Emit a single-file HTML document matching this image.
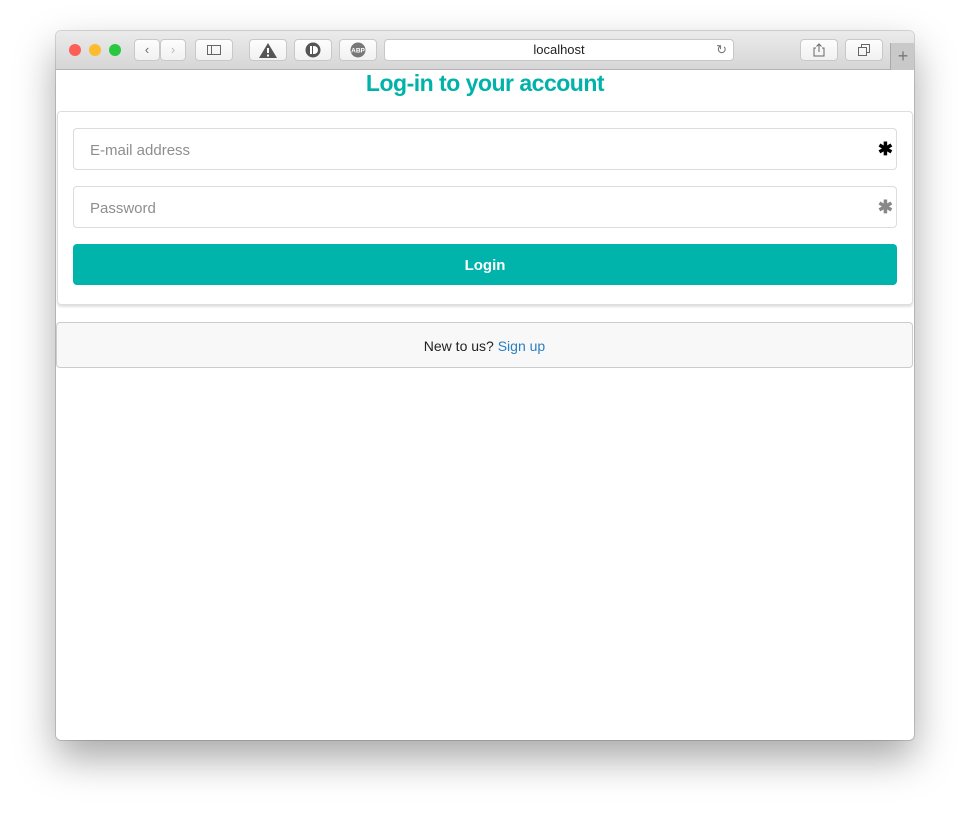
<!DOCTYPE html>
<html><head><style>
body{margin:0;width:970px;height:820px;background:#fff;position:relative;overflow:hidden;font-family:"Liberation Sans",sans-serif}
.win{position:absolute;left:56px;top:31px;width:858px;height:709px;background:#fff;border-radius:5px;box-shadow:0 18px 40px rgba(0,0,0,.35),0 0 0 1px rgba(0,0,0,.15);overflow:hidden}
.tb{position:absolute;left:0;top:0;width:858px;height:38px;background:linear-gradient(#ebebeb,#d6d6d6);border-bottom:1px solid #b4b4b4}
.dot{position:absolute;top:13px;width:12px;height:12px;border-radius:50%}
.btn{position:absolute;top:8px;height:22px;background:linear-gradient(#fdfdfd,#f1f1f1);border:1px solid #c8c8c8;border-radius:4px;box-sizing:border-box;color:#666;font-size:13px;text-align:center;line-height:20px}
.url{position:absolute;left:328px;top:8px;width:350px;height:22px;background:#fff;border:1px solid #c8c8c8;border-radius:4px;box-sizing:border-box;text-align:center;font-size:13px;line-height:20px;color:#222}
h1{position:absolute;left:0;top:39px;width:858px;margin:0;text-align:center;color:#00b2a9;font-size:23px;font-weight:bold;letter-spacing:-.5px}
.seg{position:absolute;left:1px;top:80px;width:856px;height:194px;border:1px solid #ddd;border-radius:4px;box-sizing:border-box;box-shadow:0 2px 2px rgba(0,0,0,.12)}
.inp{position:absolute;left:15px;width:824px;height:42px;border:1px solid #dcdcdc;border-radius:4px;box-sizing:border-box;font-size:15px;color:#8e8e8e;padding-left:16px;line-height:44px}
.ast{position:absolute;right:3px;top:-2px;font-size:18px;font-weight:bold}
.login{position:absolute;left:15px;top:132px;width:824px;height:41px;background:#00b4ab;border-radius:4px;color:#fff;font-weight:bold;font-size:15px;text-align:center;line-height:44px}
.msg{position:absolute;left:0;top:291px;width:857px;height:46px;background:#f8f8f8;border:1px solid #ccc;border-radius:4px;box-sizing:border-box;text-align:center;line-height:47px;font-size:14px;color:#222}
.msg a{color:#2a7fc0;text-decoration:none}
</style></head><body>
<div class="win">
<div class="tb">
<div class="dot" style="left:13px;background:#fc5f57"></div>
<div class="dot" style="left:33px;background:#fdbc2e"></div>
<div class="dot" style="left:53px;background:#28c840"></div>
<div class="btn" style="left:78px;width:26px">&#8249;</div>
<div class="btn" style="left:104px;width:26px;color:#bbb">&#8250;</div>
<div class="btn" style="left:139px;width:38px"><svg width="14" height="10" viewBox="0 0 14 10" style="margin-top:5px"><rect x=".5" y=".5" width="13" height="9" fill="none" stroke="#666"/><line x1="4.5" y1="0" x2="4.5" y2="10" stroke="#666"/></svg></div>
<div class="btn" style="left:193px;width:38px"><svg width="20" height="17" viewBox="0 0 20 17" style="margin-top:2px"><path d="M10 1L19 16H1Z" fill="#555"/><rect x="9" y="6" width="2" height="5" fill="#fff"/><rect x="9" y="12.5" width="2" height="2" fill="#fff"/></svg></div>
<div class="btn" style="left:238px;width:38px"><svg width="16" height="16" style="margin-top:2px"><circle cx="8" cy="8" r="7.5" fill="#555"/><rect x="5" y="4" width="2" height="8" fill="#fff"/><path d="M8 4h1a4 4 0 010 8H8z" fill="#fff"/></svg></div>
<div class="btn" style="left:283px;width:38px"><svg width="16" height="16" style="margin-top:2px"><circle cx="8" cy="8" r="7.5" fill="#777"/><text x="8" y="10.5" font-size="6.5" font-weight="bold" fill="#fff" text-anchor="middle" font-family="Liberation Sans">ABP</text></svg></div>
<div class="url">localhost<span style="position:absolute;right:6px;color:#777">&#8635;</span></div>
<div class="btn" style="left:744px;width:38px"><svg width="12" height="14" style="margin-top:3px"><path d="M3 5H1v8h10V5H9M6 1v8M3.5 3.5L6 1l2.5 2.5" fill="none" stroke="#666"/></svg></div>
<div class="btn" style="left:789px;width:38px"><svg width="12" height="12" style="margin-top:4px"><rect x=".5" y="3.5" width="8" height="8" fill="none" stroke="#666"/><path d="M3.5 3.5V.5h8v8h-3" fill="none" stroke="#666"/></svg></div>
<div style="position:absolute;left:834px;top:12px;width:24px;height:27px;background:#c9c9c9;border-left:1px solid #aaa;color:#777;font-size:18px;text-align:center;line-height:26px">+</div>
</div>
<h1>Log-in to your account</h1>
<div class="seg">
<div class="inp" style="top:16px">E-mail address<span class="ast" style="color:#000">&#10033;</span></div>
<div class="inp" style="top:74px">Password<span class="ast" style="color:#888">&#10033;</span></div>
<div class="login">Login</div>
</div>
<div class="msg">New to us? <a>Sign up</a></div>
</div>
</body></html>
